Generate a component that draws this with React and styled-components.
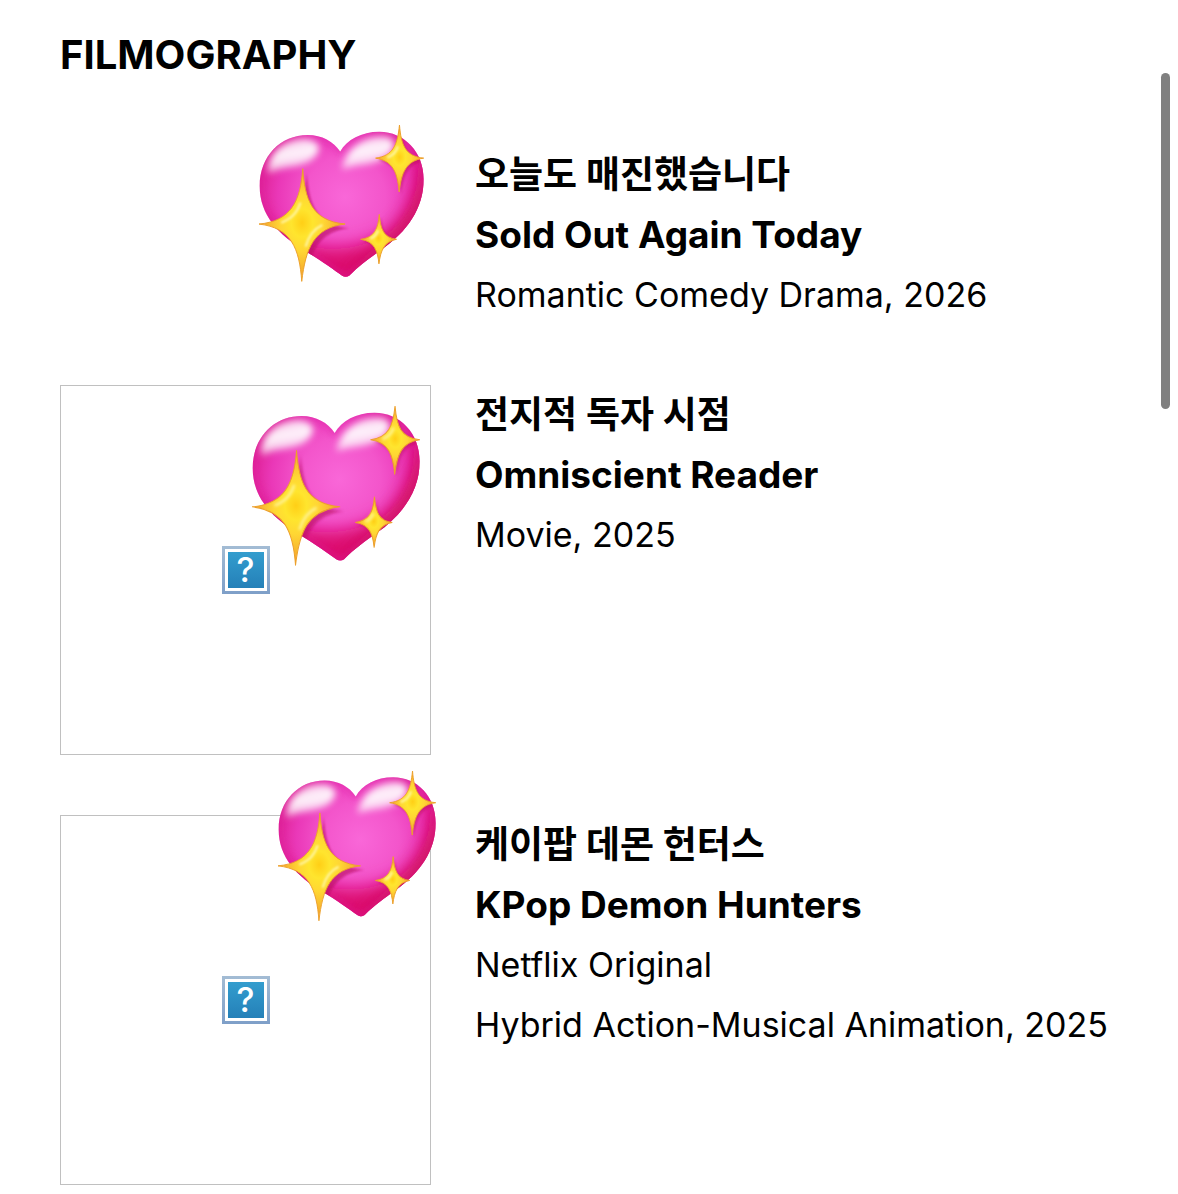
import { useId } from 'react';
import styled, { createGlobalStyle } from 'styled-components';

const films = [
    {
        id: 'sold-out',
        korean: '오늘도 매진했습니다',
        title: 'Sold Out Again Today',
        details: ['Romantic Comedy Drama, 2026'],
        heart: { size: 165, left: 198, top: -21 },
    },
    {
        id: 'omniscient',
        korean: '전지적 독자 시점',
        title: 'Omniscient Reader',
        details: ['Movie, 2025'],
        missing: true,
        heart: { size: 168, left: 191, top: 20 },
    },
    {
        id: 'kpop',
        korean: '케이팝 데몬 헌터스',
        title: 'KPop Demon Hunters',
        details: ['Netflix Original', 'Hybrid Action-Musical Animation, 2025'],
        missing: true,
        heart: { size: 158, left: 217, top: -45 },
    },
];

const heartPath =
    'M270 108 C250 78 215 58 172 58 C90 58 27 122 27 212 C27 300 84 358 164 408 C210 436 250 464 276 483 Q287 490 298 482 C330 450 362 428 395 404 C472 350 522 280 522 192 C522 110 465 48 388 48 C335 48 290 72 270 108 Z';

const stars = [
    'M157 160 C164 250 182 317 285 327 C190 338 166 400 154 500 C147 400 122 338 25 327 C122 318 150 258 157 160 Z',
    'M449 28 C454 88 466 122 522 128 C468 136 455 172 448 230 C443 172 430 136 377 128 C430 121 443 88 449 28 Z',
    'M388 298 C392 342 401 368 440 373 C402 380 392 408 387 447 C383 408 374 380 332 373 C374 367 384 342 388 298 Z',
];

const SparklingHeart = ({ size, left, top }) => {
    const id = useId();
    const url = (name) => `url(#${id}${name})`;

    return (
        <HeartIcon
            viewBox="25 28 498 473"
            $size={size}
            $left={left}
            $top={top}
            role="img"
            aria-label="Sparkling heart"
        >
            <defs>
                <radialGradient
                    id={`${id}body`}
                    gradientUnits="userSpaceOnUse"
                    cx="285"
                    cy="245"
                    r="270"
                >
                    <stop offset="0" stopColor="#f967d8" />
                    <stop offset="0.45" stopColor="#f355cb" />
                    <stop offset="0.75" stopColor="#ea38b8" />
                    <stop offset="1" stopColor="#de1f92" />
                </radialGradient>
                <linearGradient id={`${id}shine`} x1="0.35" y1="0" x2="0.6" y2="1">
                    <stop offset="0" stopColor="#fff" stopOpacity="0.7" />
                    <stop offset="0.45" stopColor="#fff" stopOpacity="0.95" />
                    <stop offset="1" stopColor="#fff" stopOpacity="0.5" />
                </linearGradient>
                <radialGradient id={`${id}star`} cx="0.5" cy="0.48" r="0.5">
                    <stop offset="0" stopColor="#ffcf16" />
                    <stop offset="0.25" stopColor="#ffe52e" />
                    <stop offset="0.5" stopColor="#ffd634" />
                    <stop offset="1" stopColor="#f3a02c" />
                </radialGradient>
                <clipPath id={`${id}clip`}>
                    <path d={heartPath} />
                </clipPath>
                <filter id={`${id}soft`} x="-50%" y="-50%" width="200%" height="200%">
                    <feGaussianBlur stdDeviation="11" />
                </filter>
                <filter id={`${id}wide`} x="-50%" y="-50%" width="200%" height="200%">
                    <feGaussianBlur stdDeviation="26" />
                </filter>
                <filter id={`${id}glint`} x="-50%" y="-50%" width="200%" height="200%">
                    <feGaussianBlur stdDeviation="4" />
                </filter>
            </defs>

            <path d={heartPath} fill={url('body')} />
            <g clipPath={url('clip')}>
                <path
                    d="M560 90 L560 520 L40 520 L20 290 C70 370 160 400 245 402 C350 400 440 360 482 280 C505 230 502 160 515 90 Z"
                    fill="#dd0b70"
                    filter={url('wide')}
                />
                <path
                    d="M560 120 C500 270 450 360 380 410 C350 440 320 470 290 500 L560 500 Z"
                    fill="#c81245"
                    opacity="0.75"
                    filter={url('wide')}
                />
                <path
                    d={heartPath}
                    fill="none"
                    stroke="#dc1fa0"
                    strokeWidth="12"
                    opacity="0.6"
                    filter={url('soft')}
                />
                <path
                    d="M52 172 C50 108 110 66 170 70 C214 78 214 106 188 130 C152 160 100 150 52 174 Z"
                    fill={url('shine')}
                    filter={url('soft')}
                />
                <path
                    d="M276 158 C292 88 355 56 413 64 C445 74 436 108 402 130 C362 152 315 146 276 162 Z"
                    fill={url('shine')}
                    filter={url('soft')}
                />
                <path
                    d={stars[0]}
                    fill="#b80861"
                    opacity="0.6"
                    transform="translate(12 13)"
                    filter={url('glint')}
                />
                <path
                    d={stars[1]}
                    fill="#b80850"
                    opacity="0.45"
                    transform="translate(6 7)"
                    filter={url('glint')}
                />
                <path
                    d={stars[2]}
                    fill="#b80850"
                    opacity="0.45"
                    transform="translate(5 6)"
                    filter={url('glint')}
                />
            </g>

            {stars.map((star) => (
                <path
                    key={star}
                    d={star}
                    fill={url('star')}
                    stroke="#eca02c"
                    strokeWidth="3"
                    strokeLinejoin="round"
                />
            ))}
            <g fill="none" stroke="#fff5a0" strokeWidth="7" filter={url('glint')}>
                <path d="M150 262 C140 292 125 310 92 323" />
                <path d="M216 330 C190 342 175 362 166 395" />
                <path d="M444 92 C440 110 431 119 412 126" />
                <path d="M384 346 C381 358 375 366 361 371" />
            </g>
        </HeartIcon>
    );
};

const App = () => {
    return (
        <>
            <GlobalStyle />
            <Page>
                <Heading>FILMOGRAPHY</Heading>
                <FilmList>
                    {films.map((film) => (
                        <Film key={film.id}>
                            <Poster $missing={film.missing}>
                                {film.missing && (
                                    <MissingImage role="img" aria-label="Missing image">
                                        <span>?</span>
                                    </MissingImage>
                                )}
                                <SparklingHeart {...film.heart} />
                            </Poster>
                            <div>
                                <Title lang="ko">{film.korean}</Title>
                                <Title>{film.title}</Title>
                                {film.details.map((detail) => (
                                    <Detail key={detail}>{detail}</Detail>
                                ))}
                            </div>
                        </Film>
                    ))}
                </FilmList>
                <ScrollThumb />
            </Page>
        </>
    );
};

const GlobalStyle = createGlobalStyle`
    * {
        box-sizing: border-box;
        margin: 0;
        padding: 0;
    }

    body {
        background: #fff;
        color: #000;
        font-family: Inter, 'Noto Sans CJK KR', sans-serif;
    }
`;

const Page = styled.main`
    padding: 25px 30px 8px 60px;
`;

const Heading = styled.h1`
    margin-bottom: 60px;
    font-size: 40px;
    font-weight: 700;
    line-height: 60px;
`;

const FilmList = styled.ul`
    display: grid;
    gap: 60px;
    list-style: none;
`;

const Film = styled.li`
    display: grid;
    grid-template-columns: 371px 1fr;
    column-gap: 44px;
`;

const Poster = styled.div`
    position: relative;
    display: flex;
    align-items: center;
    justify-content: center;
    height: ${({ $missing }) => ($missing ? '370px' : 'auto')};
    border: 1px solid ${({ $missing }) => ($missing ? '#c0c0c0' : 'transparent')};
`;

const HeartIcon = styled.svg`
    position: absolute;
    left: ${({ $left }) => $left}px;
    top: ${({ $top }) => $top}px;
    width: ${({ $size }) => $size}px;
`;

const MissingImage = styled.div`
    width: 48px;
    height: 48px;
    padding: 3px;
    background: linear-gradient(#a3bcd4, #7e9fc8);

    span {
        display: block;
        height: 42px;
        border: 3px solid #fff;
        background: linear-gradient(#339dce, #2580b8);
        color: #fff;
        font-size: 34px;
        font-weight: 500;
        line-height: 36px;
        text-align: center;
    }
`;

const Title = styled.h2`
    font-size: 37px;
    font-weight: 700;
    line-height: 60px;
`;

const Detail = styled.p`
    font-size: 34px;
    line-height: 60px;
`;

const ScrollThumb = styled.div`
    position: absolute;
    top: 73px;
    right: 8px;
    width: 9px;
    height: 336px;
    border-radius: 5px;
    background: #808080;
`;

export default App;
